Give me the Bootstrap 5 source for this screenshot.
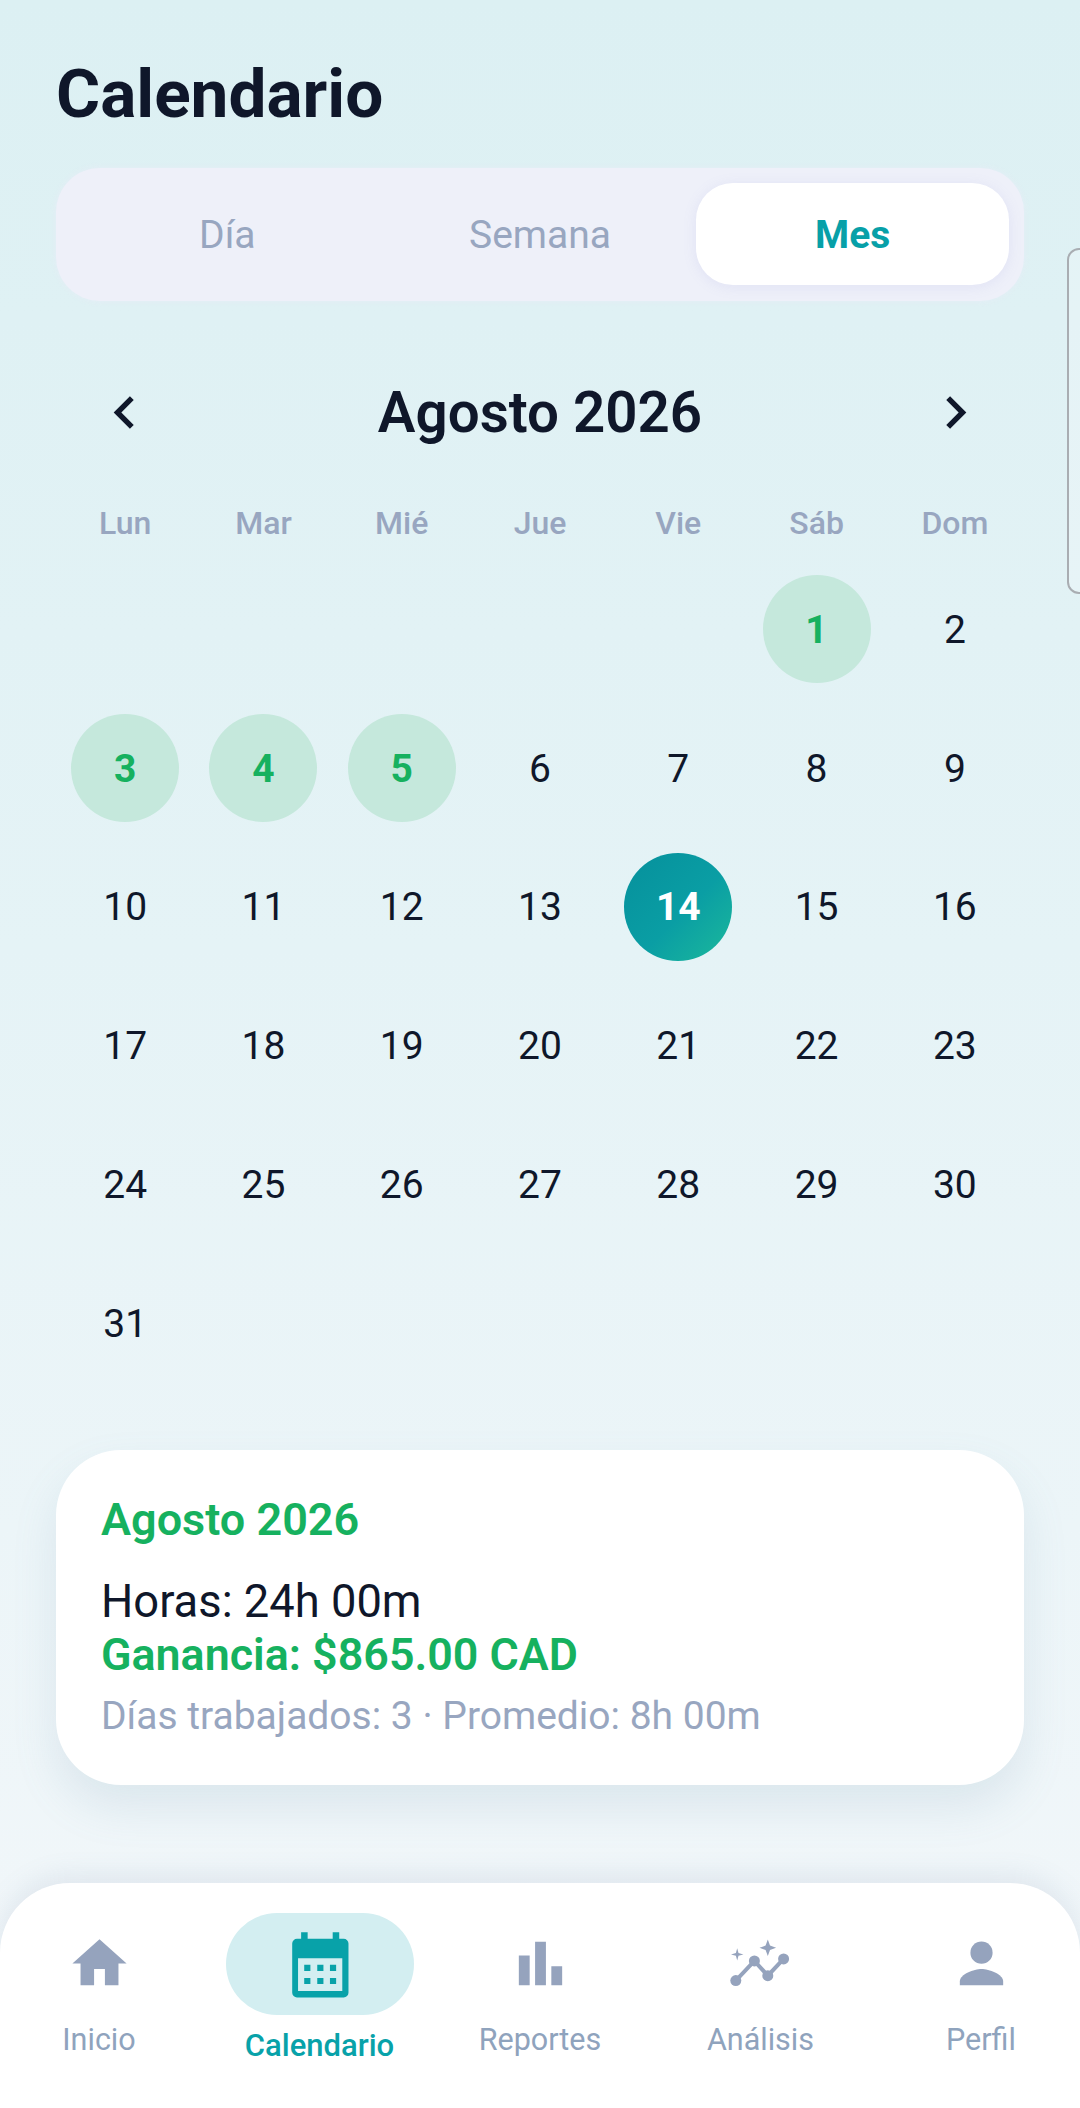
<!DOCTYPE html>
<html lang="es">
<head>
<meta charset="utf-8">
<title>Calendario</title>
<link href="https://cdn.jsdelivr.net/npm/bootstrap@5.3.0/dist/css/bootstrap.min.css" rel="stylesheet">
<style>
html,body{height:2108px;overflow:hidden}
body{font-family:Roboto,"Liberation Sans",sans-serif;background:linear-gradient(180deg,#dcf0f3 0%,#e5f3f6 45%,#f3f7fa 100%);color:#0f172a;position:relative}
.app-page{height:2108px}
.app-main{padding:56px 56px 0}
.app-title{font-size:67.5px;line-height:76px;font-weight:700;margin:0 0 36px;color:#0f172a}
.seg-wrap{background:#eef0f9;border-radius:44px;padding:15px 15px 16px;height:133px;box-shadow:0 0 6px rgba(235,235,248,.6)}
.seg-item{flex:1 1 0;border-radius:37px;font-size:39px;color:#98a6c0;border:0;background:transparent;padding:2px 0 0}
.seg-item.is-on{background:#fff;color:#07a0a8;font-weight:700;box-shadow:0 2px 14px rgba(130,130,210,.12)}
.month-row{margin-top:79px;padding:0 36px;height:65px}
.month-name{font-size:56.500px;font-weight:600;line-height:65px;margin:0;padding-top:2px;color:#0f172a}
.chev{width:65px;height:65px;fill:#0f172a;display:block}
.cal-grid{display:grid;grid-template-columns:repeat(7,1fr)}
.week-row{margin-top:59px;margin-bottom:18px;height:38px;line-height:38px;font-size:32px;font-weight:500;color:#98a6c0;text-align:center}
.day-cell{height:138.7px;font-size:39px;color:#0f172a}
.day-dot{width:108px;height:108px;border-radius:50%;padding-top:2px}
.day-dot.is-work{background:#c5e8dc;color:#16b15f;font-weight:700}
.day-dot.is-today{background:linear-gradient(135deg,#06909c 0%,#0a9ea4 55%,#1cb99b 100%);color:#fff;font-weight:700}
.sum-card{margin-top:58px;height:335px;background:#fff;border:0;border-radius:65px;padding:45px;box-shadow:0 22px 44px rgba(110,145,175,.15)}
.sum-title{font-size:45px;line-height:50px;font-weight:600;color:#16b15f;margin:0 0 30px}
.sum-hours{font-size:45.300px;line-height:53px;color:#0f172a}
.sum-money{font-size:44.800px;line-height:53px;font-weight:600;color:#16b15f}
.sum-note{font-size:39px;line-height:44px;color:#98a6c0;margin-top:13px}
.tab-bar{height:225px;background:#fff;border-radius:70px 70px 0 0;padding:0 5px;box-shadow:0 -8px 26px rgba(110,130,160,.13)}
.tab-item{width:188px;text-decoration:none;color:#8fa3bd;font-size:30.500px;line-height:34px}
.tab-item svg{width:65px;height:65px;fill:#95a3bd;display:block;margin-top:48px;margin-bottom:27px}
.tab-item .ana-line{fill:none;stroke:#95a3bd;stroke-width:4}
.tab-pill{width:188px;height:102px;border-radius:51px;background:#d3eef1;margin-top:30px;margin-bottom:14px}
.tab-item .tab-pill svg{width:70px;height:79px;fill:#08a2a9;margin:0}
.tab-item.is-on{color:#08a2a9;font-weight:500;font-size:31px}
.ghost-edge{position:absolute;left:1067px;top:248px;width:30px;height:346px;border:2px solid #a9adb2;border-radius:12px;background:rgba(255,255,255,.2)}
</style>
</head>
<body>
<div class="app-page d-flex flex-column">
  <main class="app-main flex-grow-1">
    <h1 class="app-title">Calendario</h1>
    <div class="seg-wrap d-flex">
      <button class="seg-item" type="button">Día</button>
      <button class="seg-item" type="button">Semana</button>
      <button class="seg-item is-on" type="button">Mes</button>
    </div>
    <div class="month-row d-flex align-items-center justify-content-between">
      <svg class="chev" viewBox="0 0 24 24"><path d="M15.41 7.41 14 6l-6 6 6 6 1.41-1.41L10.83 12z"/></svg>
      <h2 class="month-name">Agosto 2026</h2>
      <svg class="chev" viewBox="0 0 24 24"><path d="M8.59 16.59 10 18l6-6-6-6-1.41 1.41L13.17 12z"/></svg>
    </div>
    <div class="cal-grid week-row">
      <div>Lun</div><div>Mar</div><div>Mié</div><div>Jue</div><div>Vie</div><div>Sáb</div><div>Dom</div>
    </div>
    <div class="cal-grid" id="days"></div>
    <div class="card sum-card">
      <h3 class="sum-title">Agosto 2026</h3>
      <div class="sum-hours">Horas: 24h 00m</div>
      <div class="sum-money">Ganancia: $865.00 CAD</div>
      <div class="sum-note">Días trabajados: 3 · Promedio: 8h 00m</div>
    </div>
  </main>
  <nav class="tab-bar d-flex justify-content-between">
    <a class="tab-item d-flex flex-column align-items-center" href="#">
      <svg viewBox="0 0 24 24"><path d="M10 20v-6h4v6h5v-8h3L12 3 2 12h3v8z"/></svg>
      <span>Inicio</span>
    </a>
    <a class="tab-item is-on d-flex flex-column align-items-center" href="#">
      <span class="tab-pill d-flex align-items-center justify-content-center">
        <svg viewBox="824 192 204 228"><path fill-rule="evenodd" d="M859 231h12v-19h19v19h73v-19h19v19h13a14 14 0 0 1 14 14v143a14 14 0 0 1-14 14H859a14 14 0 0 1-14-14V245a14 14 0 0 1 14-14zm3 57v95h129v-95z"/><path d="M880 307h18v18h-18zm38 0h18v18h-18zm37 0h18v18h-18zm-75 38h18v18h-18zm38 0h18v18h-18zm37 0h18v18h-18z"/></svg>
      </span>
      <span>Calendario</span>
    </a>
    <a class="tab-item d-flex flex-column align-items-center" href="#">
      <svg viewBox="0 0 24 24"><path d="M4 9h4v11H4zm12 4h4v7h-4zm-6-9h4v16h-4z"/></svg>
      <span>Reportes</span>
    </a>
    <a class="tab-item d-flex flex-column align-items-center" href="#">
      <svg viewBox="0 0 65 65">
        <polyline class="ana-line" points="7.8,49.6 26.400,29.900 39.800,44.700 55.600,27.900"/>
        <circle cx="7.800" cy="49.600" r="5.500"/><circle cx="26.400" cy="29.900" r="5.500"/><circle cx="39.800" cy="44.700" r="5.500"/><circle cx="55.600" cy="27.900" r="5.500"/>
        <path d="M39.800 8.500l2.200 6.100 6.100 2.200-6.100 2.200-2.200 6.100-2.200-6.100-6.100-2.200 6.100-2.200z"/>
        <path d="M9.200 17.200l1.300 4.900 4.900 1.300-4.900 1.300-1.300 4.900-1.300-4.900-4.900-1.300 4.900-1.300z"/>
      </svg>
      <span>Análisis</span>
    </a>
    <a class="tab-item d-flex flex-column align-items-center" href="#">
      <svg viewBox="0 0 24 24"><circle cx="12" cy="8" r="4.100"/><path d="M4 20v-1.400c0-2.700 5.300-4.600 8-4.600s8 1.900 8 4.600V20z"/></svg>
      <span>Perfil</span>
    </a>
  </nav>
</div>
<div class="ghost-edge"></div>
<script>
var work=[1,3,4,5],html='';
for(var i=0;i<5;i++){html+='<div class="day-cell"></div>';}
for(var d=1;d<=31;d++){
  var c='day-dot d-flex align-items-center justify-content-center';
  if(work.indexOf(d)>=0)c+=' is-work';
  if(d===14)c+=' is-today';
  html+='<div class="day-cell d-flex align-items-center justify-content-center"><div class="'+c+'">'+d+'</div></div>';
}
document.getElementById('days').innerHTML=html;
</script>
<script src="https://cdn.jsdelivr.net/npm/bootstrap@5.3.0/dist/js/bootstrap.bundle.min.js"></script>
</body>
</html>
